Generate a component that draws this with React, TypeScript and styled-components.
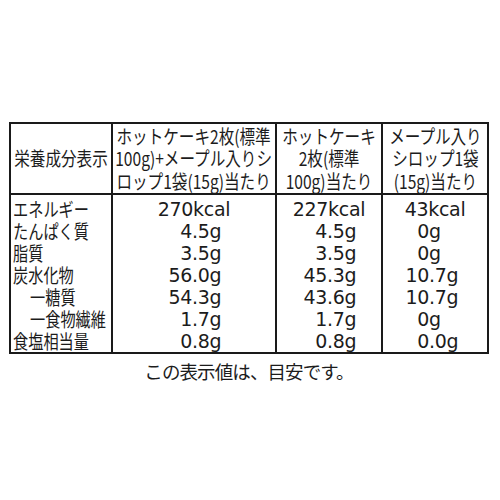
import React from 'react';
import styled, { createGlobalStyle } from 'styled-components';

const Global = createGlobalStyle`
  html, body { margin: 0; padding: 0; background: #fff; }
  body { font-family: "Noto Sans CJK JP", "Noto Sans", sans-serif; color: #1c1c1c; }
`;

const Page = styled.div`
  width: 500px;
  height: 500px;
  box-sizing: border-box;
  padding: 122px 11px 0 9px;
`;

const Table = styled.div`
  display: grid;
  grid-template-columns: 100px 162px 104px 104px;
  grid-template-rows: 69px 157px;
  gap: 2px;
  padding: 2px;
  background: #1a1a1a;
  width: 480px;
  box-sizing: border-box;
`;

const HeadCell = styled.div`
  background: #fff;
  display: flex;
  align-items: center;
  justify-content: center;
  overflow: visible;
`;

const Condensed = styled.span<{ $scale: number; $origin?: string }>`
  display: inline-block;
  transform: scaleX(${(p) => p.$scale});
  transform-origin: ${(p) => p.$origin ?? 'center'} center;
  white-space: nowrap;
`;

const HeadText = styled(Condensed)`
  text-align: center;
  font-size: 19px;
  line-height: 22.5px;
`;

const LabelCell = styled.div`
  background: #fff;
  padding: 3px 0 0 2px;
  display: flex;
  flex-direction: column;
`;

const Label = styled.div<{ $indent?: boolean }>`
  height: 22px;
  line-height: 22px;
  font-size: 19px;
  padding-left: ${(p) => (p.$indent ? 17 : 0)}px;
  white-space: nowrap;
`;

const ValueCell = styled.div`
  background: #fff;
  padding-top: 3px;
  display: flex;
  flex-direction: column;
`;

const ValueRow = styled.div<{ $center?: boolean }>`
  height: 22px;
  line-height: 22px;
  display: flex;
  justify-content: ${(p) => (p.$center ? 'center' : 'flex-start')};
  font-family: "DejaVu Sans", sans-serif;
  font-size: 19px;
  letter-spacing: -0.3px;
  white-space: nowrap;
`;

const Int = styled.span<{ $w: number }>`
  width: ${(p) => p.$w}px;
  flex: none;
  text-align: right;
`;

const Footer = styled.div`
  width: 480px;
  margin-top: 6px;
  text-align: center;
  font-size: 18.5px;
  line-height: 22px;
  letter-spacing: -0.9px;
`;

const labels: { text: string; indent?: boolean }[] = [
  { text: 'エネルギー' },
  { text: 'たんぱく質' },
  { text: '脂質' },
  { text: '炭水化物' },
  { text: '一糖質', indent: true },
  { text: '一食物繊維', indent: true },
  { text: '食塩相当量' },
];

const columns: { intW: number; values: string[] }[] = [
  { intW: 79, values: ['270kcal', '4.5g', '3.5g', '56.0g', '54.3g', '1.7g', '0.8g'] },
  { intW: 50, values: ['227kcal', '4.5g', '3.5g', '45.3g', '43.6g', '1.7g', '0.8g'] },
  { intW: 46, values: ['43kcal', '0g', '0g', '10.7g', '10.7g', '0g', '0.0g'] },
];

const headers: string[][] = [
  ['栄養成分表示'],
  ['ホットケーキ2枚(標準', '100g)+メープル入りシ', 'ロップ1袋(15g)当たり'],
  ['ホットケーキ', '2枚(標準', '100g)当たり'],
  ['メープル入り', 'シロップ1袋', '(15g)当たり'],
];

function Value({ v, intW }: { v: string; intW: number }) {
  if (v.includes('kcal')) return <ValueRow $center>{v}</ValueRow>;
  const m = v.match(/^(\d+)(.*)$/);
  const int = m ? m[1] : v;
  const rest = m ? m[2] : '';
  return (
    <ValueRow>
      <Int $w={intW}>{int}</Int>
      <span>{rest}</span>
    </ValueRow>
  );
}

export default function App() {
  return (
    <>
      <Global />
      <Page>
        <Table>
          {headers.map((lines, i) => (
            <HeadCell key={i}>
              <HeadText $scale={0.82}>
                {lines.map((l, j) => (
                  <React.Fragment key={j}>
                    {j > 0 && <br />}
                    {l}
                  </React.Fragment>
                ))}
              </HeadText>
            </HeadCell>
          ))}
          <LabelCell>
            {labels.map((l) => (
              <Label key={l.text} $indent={l.indent}>
                <Condensed $scale={0.8} $origin="left">
                  {l.text}
                </Condensed>
              </Label>
            ))}
          </LabelCell>
          {columns.map((c, i) => (
            <ValueCell key={i}>
              {c.values.map((v, j) => (
                <Value key={j} v={v} intW={c.intW} />
              ))}
            </ValueCell>
          ))}
        </Table>
        <Footer>この表示値は、目安です。</Footer>
      </Page>
    </>
  );
}
